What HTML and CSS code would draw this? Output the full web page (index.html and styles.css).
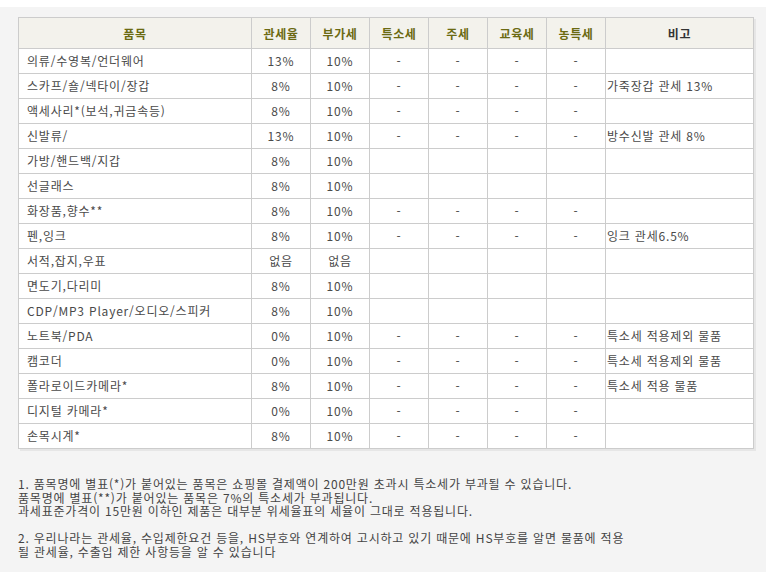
FILE: index.html
```html
<!DOCTYPE html>
<html lang="ko">
<head>
<meta charset="utf-8">
<link rel="stylesheet" href="styles.css">
</head>
<body>
<div class="panel">
  <table class="tax">
    <colgroup>
      <col class="c-item"><col class="c-n"><col class="c-n"><col class="c-n"><col class="c-n"><col class="c-n"><col class="c-n"><col class="c-note">
    </colgroup>
    <thead>
      <tr>
        <th>품목</th><th>관세율</th><th>부가세</th><th>특소세</th><th>주세</th><th>교육세</th><th>농특세</th><th class="h-note">비고</th>
      </tr>
    </thead>
    <tbody>
      <tr><td class="item">의류/수영복/언더웨어</td><td>13%</td><td>10%</td><td>-</td><td>-</td><td>-</td><td>-</td><td class="note"></td></tr>
      <tr><td class="item">스카프/숄/넥타이/장갑</td><td>8%</td><td>10%</td><td>-</td><td>-</td><td>-</td><td>-</td><td class="note">가죽장갑 관세 13%</td></tr>
      <tr><td class="item">액세사리*(보석,귀금속등)</td><td>8%</td><td>10%</td><td>-</td><td>-</td><td>-</td><td>-</td><td class="note"></td></tr>
      <tr><td class="item">신발류/</td><td>13%</td><td>10%</td><td>-</td><td>-</td><td>-</td><td>-</td><td class="note">방수신발 관세 8%</td></tr>
      <tr><td class="item">가방/핸드백/지갑</td><td>8%</td><td>10%</td><td></td><td></td><td></td><td></td><td class="note"></td></tr>
      <tr><td class="item">선글래스</td><td>8%</td><td>10%</td><td></td><td></td><td></td><td></td><td class="note"></td></tr>
      <tr><td class="item">화장품,향수**</td><td>8%</td><td>10%</td><td>-</td><td>-</td><td>-</td><td>-</td><td class="note"></td></tr>
      <tr><td class="item">펜,잉크</td><td>8%</td><td>10%</td><td>-</td><td>-</td><td>-</td><td>-</td><td class="note">잉크 관세6.5%</td></tr>
      <tr><td class="item">서적,잡지,우표</td><td>없음</td><td>없음</td><td></td><td></td><td></td><td></td><td class="note"></td></tr>
      <tr><td class="item">면도기,다리미</td><td>8%</td><td>10%</td><td></td><td></td><td></td><td></td><td class="note"></td></tr>
      <tr><td class="item">CDP/MP3 Player/오디오/스피커</td><td>8%</td><td>10%</td><td></td><td></td><td></td><td></td><td class="note"></td></tr>
      <tr><td class="item">노트북/PDA</td><td>0%</td><td>10%</td><td>-</td><td>-</td><td>-</td><td>-</td><td class="note">특소세 적용제외 물품</td></tr>
      <tr><td class="item">캠코더</td><td>0%</td><td>10%</td><td>-</td><td>-</td><td>-</td><td>-</td><td class="note">특소세 적용제외 물품</td></tr>
      <tr><td class="item">폴라로이드카메라*</td><td>8%</td><td>10%</td><td>-</td><td>-</td><td>-</td><td>-</td><td class="note">특소세 적용 물품</td></tr>
      <tr><td class="item">디지털 카메라*</td><td>0%</td><td>10%</td><td>-</td><td>-</td><td>-</td><td>-</td><td class="note"></td></tr>
      <tr><td class="item">손목시계*</td><td>8%</td><td>10%</td><td>-</td><td>-</td><td>-</td><td>-</td><td class="note"></td></tr>
    </tbody>
  </table>
  <div class="notes">
    <p class="line">1. 품목명에 별표(*)가 붙어있는 품목은 쇼핑몰 결제액이 200만원 초과시 특소세가 부과될 수 있습니다.</p>
    <p class="line">품목명에 별표(**)가 붙어있는 품목은 7%의 특소세가 부과됩니다.</p>
    <p class="line">과세표준가격이 15만원 이하인 제품은 대부분 위세율표의 세율이 그대로 적용됩니다.</p>
    <p class="line gap">2. 우리나라는 관세율, 수입제한요건 등을, HS부호와 연계하여 고시하고 있기 때문에 HS부호를 알면 물품에 적용</p>
    <p class="line">될 관세율, 수출입 제한 사항등을 알 수 있습니다</p>
  </div>
</div>
</body>
</html>
```
FILE: styles.css
```css
html, body {
  margin: 0;
  padding: 0;
  background: #ffffff;
}
body {
  padding-top: 7px;
  font-family: "Noto Sans CJK KR", "DejaVu Sans", sans-serif;
  font-size: 12px;
  color: #444;
  letter-spacing: 0.8px;
}
.panel {
  background: #f4f4f4;
  padding: 10px 0 20px 18px;
  min-height: 540px;
  box-sizing: border-box;
}
.tax {
  border-collapse: collapse;
  table-layout: fixed;
  width: 735px;
  background: #fff;
  box-shadow: 2px 2px 0 #e6e6e6;
}
.c-item { width: 233px; }
.c-n { width: 59px; }
.c-note { width: 148px; }
.tax th, .tax td {
  border: 1px solid #cccccc;
  padding: 0;
  text-align: center;
  white-space: nowrap;
  overflow: hidden;
}
.tax th {
  height: 30px;
  background: #f3f2ec;
  color: #6b6a12;
  font-weight: bold;
  font-size: 12px;
  letter-spacing: 0.6px;
}
.tax th.h-note {
  color: #333;
}
.tax td {
  height: 24px;
  color: #4a4a4a;
  line-height: 14px;
}
.tax td.item {
  text-align: left;
  padding-left: 8px;
}
.tax td.note {
  text-align: left;
  padding-left: 1px;
}
.notes {
  margin-top: 28px;
  color: #444;
}
.line {
  margin: 0;
  height: 13.5px;
  line-height: 13.5px;
  white-space: nowrap;
}
.line.gap {
  margin-top: 13.5px;
}
```
